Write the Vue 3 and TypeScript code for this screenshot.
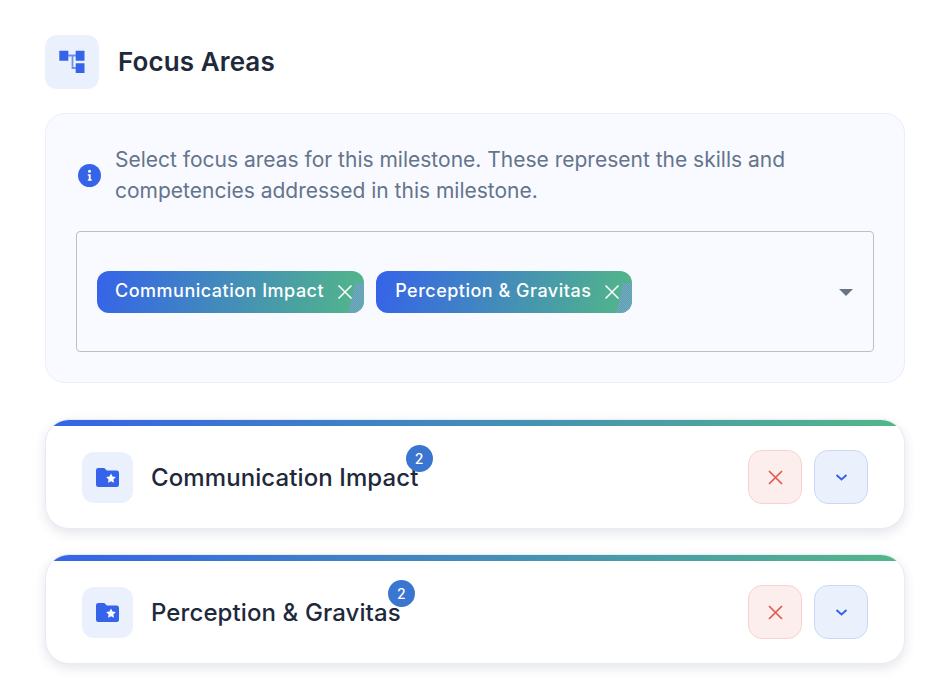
<script setup lang="ts">
const selected = ['Communication Impact', 'Perception & Gravitas'];
</script>

<template>
  <div class="page">
    <header class="head">
      <div class="head-icon">
        <svg width="26" height="24" viewBox="0 0 26 24">
          <path d="M9 5.500h8M13.500 5.500V18H17" stroke="#6f90ea" stroke-width="1.800" fill="none" />
          <rect x="0.300" y="0.700" width="9" height="10" rx="0.500" fill="#3563e9" />
          <rect x="16.700" y="0.700" width="8.800" height="10" rx="0.500" fill="#3563e9" />
          <rect x="16.700" y="13.300" width="8.800" height="9.800" rx="0.500" fill="#3563e9" />
        </svg>
      </div>
      <h2>Focus Areas</h2>
    </header>

    <section class="panel">
      <div class="hint">
        <svg class="info" width="23" height="23" viewBox="0 0 23 23">
          <circle cx="11.500" cy="11.500" r="11.500" fill="#3563e9" />
          <circle cx="11.500" cy="7.300" r="1.500" fill="#fff" />
          <path d="M9.800 10.300h2.900v5h1v1.500H9.800v-1.500h1v-3.500h-1z" fill="#fff" />
        </svg>
        <p>Select focus areas for this milestone. These represent the skills and competencies addressed in this milestone.</p>
      </div>
      <div class="select">
        <div class="chips">
          <span v-for="(name, i) in selected" :key="name" class="chip">
            <svg class="chip-ripple" width="17" height="30" viewBox="0 0 17 30" shape-rendering="crispEdges">
              <defs>
                <pattern :id="`dither-${i}`" width="2" height="2" patternUnits="userSpaceOnUse">
                  <rect width="2" height="2" fill="#52ab93" />
                  <rect width="1" height="1" fill="#7f9fdc" />
                  <rect x="1" y="1" width="1" height="1" fill="#7f9fdc" />
                </pattern>
              </defs>
              <polygon points="8,0 17,0 17,30 0,30 3,22 6,10" :fill="`url(#dither-${i})`" />
            </svg>
            <span class="chip-text">{{ name }}</span>
            <svg class="chip-x" width="14" height="14" viewBox="0 0 14 14">
              <path d="M0.500 0.500l13 13M13.500 0.500l-13 13" stroke="#fff" stroke-width="1.500" fill="none" />
            </svg>
          </span>
        </div>
        <span class="caret"></span>
      </div>
    </section>

    <article v-for="name in selected" :key="name" class="card">
      <div class="folder">
        <svg width="23" height="19" viewBox="0 0 23 19">
          <path d="M2.300 0h6l2.500 2.600h10A2.300 2.300 0 0 1 23 4.900v11.800a2.300 2.300 0 0 1-2.200 2.300H2.200A2.300 2.300 0 0 1 0 16.700V2.300A2.300 2.300 0 0 1 2.300 0z" fill="#3563e9" />
          <path d="M15 5.600l1.500 3 3.400.5-2.500 2.300.6 3.400-3-1.600-3 1.600.6-3.400-2.500-2.300 3.400-.5z" fill="#fff" />
        </svg>
      </div>
      <div class="card-title">
        {{ name }}
        <span class="badge">2</span>
      </div>
      <div class="actions">
        <button class="btn btn-del">
          <svg width="15" height="15" viewBox="0 0 15 15">
            <path d="M1 1l13 13M14 1L1 14" stroke="#e5574f" stroke-width="1.700" fill="none" />
          </svg>
        </button>
        <button class="btn btn-open">
          <svg width="13" height="9" viewBox="0 0 13 9">
            <path d="M1.500 2l5 4.500 5-4.500" stroke="#3563e9" stroke-width="2" fill="none" />
          </svg>
        </button>
      </div>
    </article>
  </div>
</template>

<style>
html, body { background: #fff; }
</style>

<style scoped>
.page { padding: 35px 45px 0; font-family: Inter, "Liberation Sans", sans-serif; }
.head { display: flex; align-items: center; gap: 19px; margin-bottom: 24px; }
.head-icon { width: 54px; height: 54px; border-radius: 12px; background: #ebf1fc; display: flex; align-items: center; justify-content: center; }
h2 { margin: 0 0 2px; font-size: 26px; font-weight: 600; letter-spacing: 0.1px; color: #1e293b; }

.panel { box-sizing: border-box; height: 270px; padding: 30px 30px 0; border: 1px solid #e9eefb; border-radius: 20px; background: #f8faff; margin-bottom: 36px; }
.hint { display: flex; align-items: center; gap: 14px; margin: 0 2px 25px; }
.hint p { margin: 0; font-size: 21px; line-height: 31px; color: #64748b; }
.info { flex: none; }

.select { box-sizing: border-box; height: 121px; border: 1px solid #bcbfc7; border-radius: 4px; padding: 0 20px; display: flex; align-items: center; justify-content: space-between; }
.chips { display: flex; gap: 12px; }
.chip { box-sizing: border-box; position: relative; overflow: hidden; height: 42px; padding: 0 12px 2px 18px; border-radius: 12px; display: flex; align-items: center; gap: 14px; color: #fff; font-size: 18px; font-weight: 500; letter-spacing: 0.5px; background: linear-gradient(100deg, #3563e9, #52b788); }
.chip:last-child { padding-left: 19px; padding-right: 13px; }
.chip-text, .chip-x { position: relative; }
.chip-x { flex: none; margin-top: 2px; }
.chip-ripple { position: absolute; right: 0; bottom: 0; }
.caret { width: 0; height: 0; margin-top: 2px; border-left: 7px solid transparent; border-right: 7px solid transparent; border-top: 7px solid #6b7280; }

.card { position: relative; box-sizing: border-box; height: 110px; margin-bottom: 25px; border-radius: 24px; background: #fff; border: 1px solid #e6ebf5; overflow: hidden; box-shadow: 0 4px 12px rgba(30, 41, 90, 0.12); display: flex; align-items: center; padding: 6px 36px 0; }
.card::before { content: ""; position: absolute; left: 0; right: 0; top: 0; height: 6px; background: linear-gradient(90deg, #3563e9, #52b788); }
.folder { width: 51px; height: 51px; border-radius: 12px; background: #ebf1fc; display: flex; align-items: center; justify-content: center; margin-right: 18px; }
.card-title { position: relative; font-size: 24px; font-weight: 500; letter-spacing: 0.1px; color: #1e293b; }
.badge { position: absolute; top: -18px; right: -14px; width: 27px; height: 27px; border-radius: 50%; background: #3a76cf; color: #fff; font-size: 14px; font-weight: 500; letter-spacing: 0; display: flex; align-items: center; justify-content: center; }
.actions { margin-left: auto; display: flex; gap: 12px; }
.btn { width: 54px; height: 54px; border-radius: 14px; padding: 0; display: flex; align-items: center; justify-content: center; }
.btn-del { background: #fdeeee; border: 1px solid #f9d2d0; }
.btn-open { background: #ebf1fc; border: 1px solid #c9d8f3; }
</style>
